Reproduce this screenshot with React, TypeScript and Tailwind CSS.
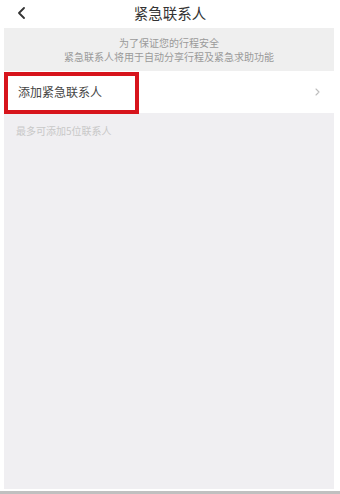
import React from "react";

export default function App() {
  return (
    <div
      className="w-[340px] h-[494px] bg-white flex flex-col overflow-hidden"
      style={{ fontFamily: '"Noto Sans CJK SC", "Noto Sans", sans-serif' }}
    >
      <div className="h-[28px] shrink-0 relative flex items-center justify-center">
        <svg
          className="absolute left-[17px] top-[7px]"
          width="9"
          height="12"
          viewBox="0 0 9 12"
          fill="none"
        >
          <path d="M7 1 L2 6 L7 11" stroke="#333333" strokeWidth="1.8" strokeLinecap="round" strokeLinejoin="round" />
        </svg>
        <span className="text-[14.5px] leading-none text-[#333333] -mt-[2px]">紧急联系人</span>
      </div>
      <div className="flex-1 ml-[4px] mr-[6px] bg-[#f0eff2] flex flex-col">
        <div className="h-[43px] bg-[#efefef] flex flex-col items-center justify-center gap-[1px] text-[10px] leading-[13px] text-[#9a9a9a]">
          <span>为了保证您的行程安全</span>
          <span>紧急联系人将用于自动分享行程及紧急求助功能</span>
        </div>
        <div className="h-[42px] bg-white relative flex items-center justify-between pl-[14px] pr-[14px]">
          <span className="text-[12px] text-[#444444]">添加紧急联系人</span>
          <svg width="5" height="8" viewBox="0 0 5 8" fill="none">
            <path d="M1 1 L4 4 L1 7" stroke="#bdbdbd" strokeWidth="1.1" strokeLinecap="round" strokeLinejoin="round" />
          </svg>
          <div className="absolute left-0 top-[1px] w-[135px] h-[42px] border-[4px] border-[#d7141c]" />
        </div>
        <div className="pl-[12px] pt-[11px] text-[10px] leading-[13px] text-[#c8c8c8]">最多可添加5位联系人</div>
      </div>
      <div className="h-[2px] shrink-0 bg-white" />
      <div className="h-[3px] shrink-0 bg-[#c0c0c0]" />
    </div>
  );
}
